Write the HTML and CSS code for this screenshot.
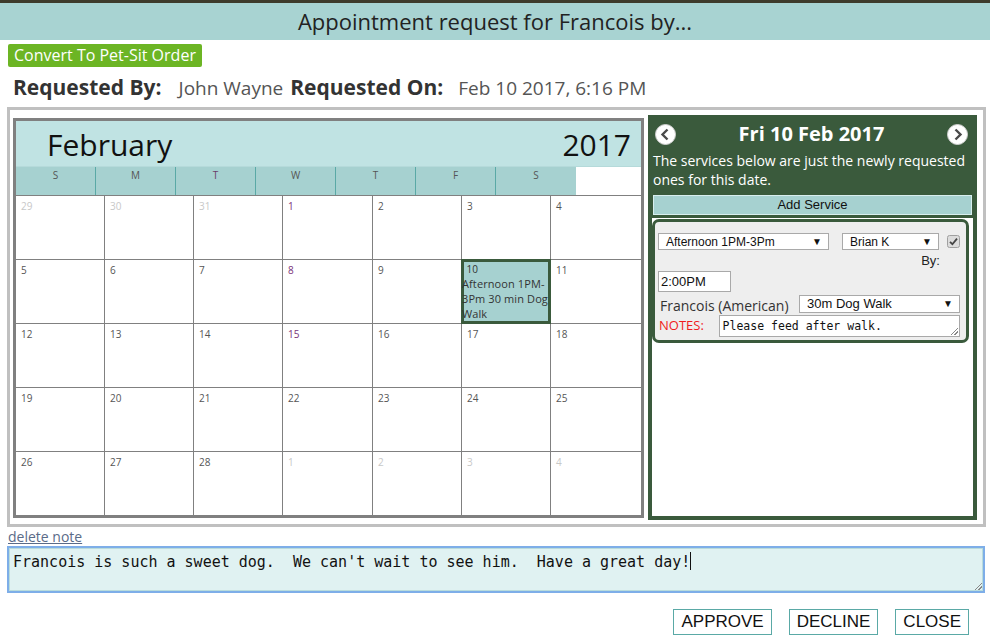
FILE: index.html
```html
<!DOCTYPE html>
<html lang="en">
<head>
  <meta charset="UTF-8">
  <meta name="viewport" content="width=device-width, initial-scale=1.0">
  <title>Appointment request</title>
  <link rel="stylesheet" href="styles.css">
</head>
<body>
  <div class="titleBar">Appointment request for Francois by...</div>
  <div class="toolbar">
    <button class="convertBtn">Convert To Pet-Sit Order</button>
  </div>
  <div class="meta">
    <span class="label">Requested By:</span>
    <span class="value by">John Wayne</span>
    <span class="label on">Requested On:</span>
    <span class="value">Feb 10 2017, 6:16 PM</span>
  </div>

  <div class="main">
    <div class="calendar">
      <div class="monthHead">
        <span class="month">February</span>
        <span class="year">2017</span>
      </div>
      <div class="weekdays">
        <div class="wd">S</div>
        <div class="wd">M</div>
        <div class="wd tue">T</div>
        <div class="wd">W</div>
        <div class="wd">T</div>
        <div class="wd">F</div>
        <div class="wd">S</div>
      </div>
      <div class="days">
        <div class="day other">29</div>
        <div class="day other">30</div>
        <div class="day other">31</div>
        <div class="day wed">1</div>
        <div class="day">2</div>
        <div class="day">3</div>
        <div class="day">4</div>

        <div class="day">5</div>
        <div class="day">6</div>
        <div class="day">7</div>
        <div class="day wed">8</div>
        <div class="day">9</div>
        <div class="day selected">
          <span class="num">&nbsp;10</span>
          <p class="event">Afternoon 1PM-3Pm 30 min Dog Walk</p>
        </div>
        <div class="day">11</div>

        <div class="day">12</div>
        <div class="day">13</div>
        <div class="day">14</div>
        <div class="day wed">15</div>
        <div class="day">16</div>
        <div class="day">17</div>
        <div class="day">18</div>

        <div class="day">19</div>
        <div class="day">20</div>
        <div class="day">21</div>
        <div class="day">22</div>
        <div class="day">23</div>
        <div class="day">24</div>
        <div class="day">25</div>

        <div class="day">26</div>
        <div class="day">27</div>
        <div class="day">28</div>
        <div class="day other">1</div>
        <div class="day other">2</div>
        <div class="day other">3</div>
        <div class="day other">4</div>
      </div>
    </div>

    <div class="panel">
      <div class="panelHead">
        <div class="nav">
          <svg class="arrow" width="21" height="21" viewBox="0 0 21 21">
            <circle cx="10.5" cy="10.5" r="10" fill="#fff" stroke="#cfcfcf" stroke-width="1"/>
            <path d="M12.5 5.5 L7.5 10.5 L12.5 15.5" fill="none" stroke="#4a4a4a" stroke-width="2.4"/>
          </svg>
          <span class="dayTitle">Fri 10 Feb 2017</span>
          <svg class="arrow" width="21" height="21" viewBox="0 0 21 21">
            <circle cx="10.5" cy="10.5" r="10" fill="#fff" stroke="#cfcfcf" stroke-width="1"/>
            <path d="M8.5 5.5 L13.5 10.5 L8.5 15.5" fill="none" stroke="#4a4a4a" stroke-width="2.4"/>
          </svg>
        </div>
        <p class="hint">The services below are just the newly requested ones for this date.</p>
        <div class="addService">Add Service</div>
      </div>
      <div class="panelBody">
        <div class="service">
          <div class="row">
            <div class="select timeSel"><span>Afternoon 1PM-3Pm</span><i>▼</i></div>
            <div class="select sitterSel"><span>Brian K</span><i>▼</i></div>
            <span class="check">
              <svg width="13" height="13" viewBox="0 0 13 13">
                <rect x="0.5" y="0.5" width="12" height="12" rx="2" fill="#dcdcdc" stroke="#a0a0a0"/>
                <path d="M3 6.8 L5.4 9.2 L10 3.6" fill="none" stroke="#444" stroke-width="1.8"/>
              </svg>
            </span>
          </div>
          <div class="byRow">By:</div>
          <div class="timeInput">2:00PM</div>
          <div class="row petRow">
            <span class="pet">Francois (American)</span>
            <div class="select walkSel"><span>30m Dog Walk</span><i>▼</i></div>
          </div>
          <div class="row notesRow">
            <span class="notesLabel">NOTES:</span>
            <div class="notes">Please feed after walk.</div>
          </div>
        </div>
      </div>
    </div>
  </div>

  <a class="deleteNote" href="#">delete note</a>
  <div class="noteBox">Francois is such a sweet dog.  We can't wait to see him.  Have a great day!<span class="caret"></span></div>

  <div class="actions">
    <button class="actBtn">APPROVE</button>
    <button class="actBtn">DECLINE</button>
    <button class="actBtn">CLOSE</button>
  </div>
</body>
</html>
```

FILE: styles.css
```css
* {
  padding: 0;
  margin: 0;
  box-sizing: border-box;
}
body {
  width: 990px;
  height: 638px;
  overflow: hidden;
  background: #fff;
  font-family: "Open Sans", "Liberation Sans", sans-serif;
  color: #333;
}

.titleBar {
  height: 40px;
  border-top: 3px solid #3e3b2c;
  background: #a8d3d2;
  color: #222;
  font-size: 22px;
  line-height: 36px;
  text-align: center;
}

.toolbar {
  padding: 4px 0 0 8px;
  height: 27px;
}
.convertBtn {
  display: block;
  height: 23px;
  padding: 0 6px;
  border: none;
  border-radius: 2px;
  background: #6cb524;
  color: #fff;
  font-family: "Open Sans", sans-serif;
  font-size: 16px;
  line-height: 23px;
}

.meta {
  display: flex;
  align-items: baseline;
  height: 40px;
  padding: 6px 0 0 13px;
}
.meta .label {
  font-size: 21px;
  font-weight: 700;
  color: #333;
  margin-right: 18px;
}
.meta .label.on {
  margin-right: 15px;
}
.meta .value {
  font-size: 19px;
  color: #555;
}
.meta .value.by {
  margin-left: -1px;
  margin-right: 7px;
}

.main {
  display: flex;
  align-items: flex-start;
  gap: 4px;
  margin: 0 4px 0 7px;
  height: 420px;
  padding: 5px 6px 4px 3px;
  border: 3px solid #c0c0c0;
}

/* calendar */
.calendar {
  width: 631px;
  margin-top: 3px;
  border: 3px solid #808080;
}
.monthHead {
  display: flex;
  justify-content: space-between;
  height: 45px;
  padding: 0 10px 0 31px;
  background: #c0e3e3;
  color: #111;
  font-size: 30px;
  line-height: 48px;
}
.weekdays {
  display: flex;
  height: 29px;
  border-top: 1px solid #b5dada;
}
.weekdays .wd {
  width: 80px;
  background: #a6d1d0;
  border-right: 1px solid #5aa9a6;
  font-size: 10px;
  line-height: 16px;
  text-align: center;
  color: #555;
}
.weekdays .wd:last-child {
  border-right: none;
}
.weekdays .wd.tue {
  color: #6b3d6b;
}
.days {
  display: grid;
  grid-template-columns: 88px 88px 88px 89px 88px 88px 1fr;
  grid-auto-rows: 63px;
  gap: 1px;
  padding-top: 1px;
  background: #808080;
}
.day {
  background: #fff;
  padding: 3px 5px;
  font-size: 10px;
  line-height: 14px;
  color: #555;
}
.day.other {
  color: #c8c8c8;
}
.day.wed {
  color: #7a3378;
}
.day.selected {
  padding: 2px 0 0;
  background: #a6d1d0;
  box-shadow: inset 0 0 0 2px #3a5a3c, 0 0 0 1px #3a5a3c;
  color: #333;
}
.day.selected .num {
  padding-left: 2px;
}
.day.selected .event {
  font-size: 11px;
  line-height: 15px;
  letter-spacing: 0.1px;
}

/* right panel */
.panel {
  width: 329px;
  height: 405px;
  border: 4px solid #3a5a3c;
  background: #fff;
}
.panelHead {
  background: #3a5a3c;
  padding: 2px 1px 3px;
  color: #fff;
}
.nav {
  display: flex;
  align-items: center;
  justify-content: space-between;
  padding: 0 4px 0 2px;
  height: 26px;
}
.nav .dayTitle {
  font-size: 20px;
  font-weight: 700;
  line-height: 26px;
}
.arrow {
  display: block;
}
.hint {
  font-size: 14px;
  line-height: 19px;
  padding: 4px 0 0;
  height: 48px;
}
.addService {
  height: 20px;
  background: #a6d1d0;
  border: 1px solid #d8eeee;
  color: #111;
  font-family: "Liberation Sans", Arial, sans-serif;
  font-size: 13px;
  line-height: 18px;
  text-align: center;
}
.panelBody {
  padding: 1px 4px 0 0;
}
.service {
  height: 124px;
  border: 3px solid #3a5a3c;
  border-radius: 7px;
  background: #eeeeee;
  padding: 11px 6px 0 3px;
  font-family: "Liberation Sans", Arial, sans-serif;
  font-size: 13px;
  color: #222;
}
.row {
  display: flex;
  align-items: center;
}
.select {
  display: flex;
  justify-content: space-between;
  align-items: center;
  height: 17px;
  padding: 0 6px 0 7px;
  background: #fff;
  border: 1px solid #a9a9a9;
  font-size: 12px;
  color: #111;
}
.select i {
  font-style: normal;
  font-size: 10px;
}
.timeSel {
  width: 171px;
}
.sitterSel {
  width: 97px;
  margin-left: 13px;
}
.check {
  margin-left: 8px;
  height: 13px;
}
.check svg {
  display: block;
}
.byRow {
  width: 282px;
  text-align: right;
  line-height: 21px;
}
.timeInput {
  width: 73px;
  height: 21px;
  border: 1px solid #a9a9a9;
  background: #fff;
  font-size: 13px;
  line-height: 19px;
  padding-left: 2px;
  color: #111;
}
.petRow {
  margin-top: 2px;
  height: 19px;
}
.pet {
  font-family: "Open Sans", sans-serif;
  font-size: 14px;
  color: #333;
  padding-left: 2px;
  width: 142px;
  line-height: 19px;
  margin-top: 4px;
}
.walkSel {
  width: 162px;
  height: 18px;
  font-size: 13px;
}
.notesRow {
  margin-top: 2px;
  align-items: flex-start;
}
.notesLabel {
  font-family: "Open Sans", sans-serif;
  font-size: 13px;
  color: #f01c1c;
  width: 61px;
  padding-left: 1px;
  line-height: 20px;
}
.notes {
  position: relative;
  width: 243px;
  height: 22px;
  border: 1px solid #a9a9a9;
  background: #fff;
  font-family: "DejaVu Sans Mono", "Liberation Mono", monospace;
  font-size: 11.5px;
  line-height: 20px;
  padding-left: 3px;
  color: #111;
}
.notes::after,
.noteBox::after {
  content: '';
  position: absolute;
  right: 1px;
  bottom: 1px;
  width: 7px;
  height: 7px;
  background: linear-gradient(135deg, transparent 45%, #888 45%, #888 55%, transparent 55%, transparent 70%, #888 70%, #888 80%, transparent 80%);
}

/* note box */
.deleteNote {
  display: block;
  margin: 1px 0 0 8px;
  font-size: 14px;
  line-height: 18px;
  color: #5a6b88;
  width: 80px;
}
.noteBox {
  position: relative;
  margin: 0 5px 0 7px;
  height: 47px;
  border: 2px solid #7eaee8;
  box-shadow: inset 0 0 0 1px #b9dcdc;
  background: #e0f2f2;
  font-family: "DejaVu Sans Mono", "Liberation Mono", monospace;
  font-size: 15px;
  line-height: 24px;
  padding: 2px 4px;
  white-space: pre;
  color: #111;
}
.caret {
  display: inline-block;
  width: 1px;
  height: 18px;
  background: #111;
  vertical-align: -3px;
}

.actions {
  display: flex;
  justify-content: flex-end;
  gap: 17px;
  padding: 16px 21px 0 0;
}
.actBtn {
  height: 26px;
  padding: 0 7px;
  background: #fff;
  border: 1px solid #5aa9a6;
  font-family: "Liberation Sans", Arial, sans-serif;
  font-size: 17px;
  color: #111;
}
```
